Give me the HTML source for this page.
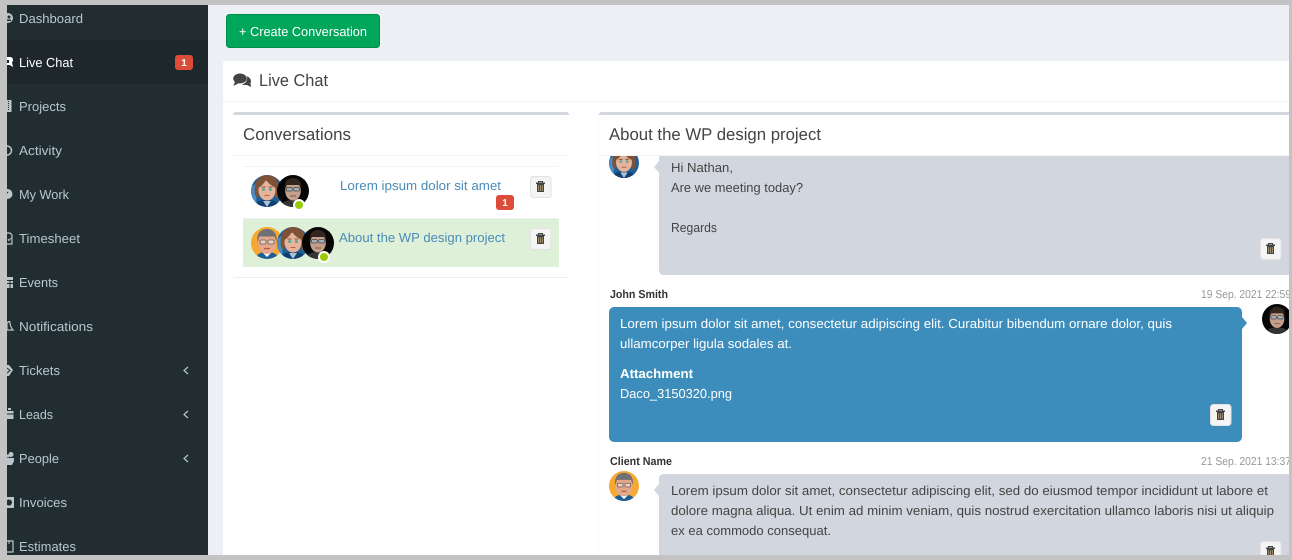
<!DOCTYPE html>
<html>
<head>
<meta charset="utf-8">
<title>Live Chat</title>
<style>
html,body{margin:0;padding:0;background:#c3c3c3;width:1292px;height:560px;overflow:hidden}
svg{display:block}
text{font-family:"Liberation Sans",sans-serif;font-size:13px;fill:#444;text-rendering:geometricPrecision}
.s text{fill:#b8c7ce}
.h{font-size:17px}
.l{fill:#4a8bb8}
.w{fill:#fff}
.n{font-size:11.5px;fill:#333;font-weight:bold}
.d{font-size:11.5px;fill:#999}
.b{font-size:10px;font-weight:bold;fill:#fff}
</style>
</head>
<body>
<svg xmlns="http://www.w3.org/2000/svg" width="1292" height="560" viewBox="0 0 1292 560">
<defs>
<clipPath id="c"><circle cx="16" cy="16" r="16"/></clipPath>
<g id="woman" clip-path="url(#c)">
<rect width="32" height="32" fill="#1d5f96"/>
<path d="M0 12L6 8L5 32H0Z" fill="#4a8cc4"/>
<path d="M4 32C5 26 10 25 16 25C22 25 27 26 28 32Z" fill="#123f70"/>
<path d="M12 26L16 32L20 26Z" fill="#a9c2d8"/>
<path d="M4 20C2 7 8 0 16 0C25 0 30 7 28 20L25 24L23 10L9 10L7 24Z" fill="#7d5236"/>
<ellipse cx="16" cy="15.500" rx="8.500" ry="10" fill="#e6b29a"/>
<path d="M7 13C11 11 13 8 15 5C18 9 21 11 25 13L25 4L16 1L7 4Z" fill="#7d5236"/>
<path d="M10.500 12H14.500M17.500 12H21.500" stroke="#5e3c28" stroke-width=".8"/>
<circle cx="12.600" cy="14.500" r="1.500" fill="#5aa596"/><circle cx="19.400" cy="14.500" r="1.500" fill="#5aa596"/>
<path d="M13.500 20.500H18.500" stroke="#b0614f" stroke-width="1"/>
</g>
<g id="man" clip-path="url(#c)">
<rect width="32" height="32" fill="#060606"/>
<path d="M4 32C5 26 10 25 16 25C22 25 27 26 28 32Z" fill="#333"/>
<ellipse cx="16" cy="16" rx="7.800" ry="9.500" fill="#c4a08c"/>
<path d="M8 14C7 6 11 3 16 3C21 3 25 6 24 14L22.500 10L9.500 10Z" fill="#33261e"/>
<rect x="9.500" y="12.500" width="5.800" height="3.500" rx="1" fill="#9fb0b8" stroke="#444" stroke-width=".7"/>
<rect x="16.700" y="12.500" width="5.800" height="3.500" rx="1" fill="#9fb0b8" stroke="#444" stroke-width=".7"/>
<path d="M13 21H19" stroke="#85574a" stroke-width="1"/>
</g>
<g id="old" clip-path="url(#c)">
<rect width="32" height="32" fill="#f6a832"/>
<path d="M4 32C6 26 11 25 16 25C21 25 26 26 28 32Z" fill="#1d5f96"/>
<path d="M11 25L16 30L21 25Z" fill="#fff"/>
<ellipse cx="16" cy="16.500" rx="9" ry="10.500" fill="#e3a78c"/>
<path d="M6.500 15C5.500 6 10 2 16 2C22 2 26.500 6 25.500 15L23.500 9.500L8.500 9.500Z" fill="#6e7073"/>
<rect x="9" y="13" width="6" height="4" rx="1" fill="#ecd2c2" stroke="#6a5a50" stroke-width=".8"/>
<rect x="17" y="13" width="6" height="4" rx="1" fill="#ecd2c2" stroke="#6a5a50" stroke-width=".8"/>
<path d="M13 21.500H19" stroke="#b9563e" stroke-width="1.200"/>
</g>
<g id="tr">
<rect x=".5" y=".5" width="20.500" height="21" rx="3" fill="#f4f4f4" stroke="#e2e2e2"/>
<path d="M8.500 6.500V5.500H12.500V6.500" fill="none" stroke="#444" stroke-width="1.100"/>
<rect x="6" y="6.500" width="9" height="1.500" fill="#444"/>
<path d="M7 8H14V16H7Z" fill="#444"/>
<path d="M8.700 9.200V15M10.500 9.200V15M12.300 9.200V15" stroke="#b9a67a" stroke-width=".8"/>
</g>
</defs>

<!-- content background -->
<rect x="7" y="5" width="1282" height="550" fill="#ecf0f5"/>

<!-- sidebar -->
<g class="s">
<rect x="7" y="5" width="201" height="550" fill="#222d32"/>
<rect x="7" y="40" width="201" height="44" fill="#1e282c"/>

<circle cx="8" cy="18" r="5" fill="#b8c7ce"/><circle cx="9" cy="17" r="1.500" fill="#222d32"/><rect x="7" y="19.500" width="4" height="1.500" fill="#222d32"/>
<path d="M7 57H10C13 57 14 60 12 62.500L13 67L9.500 65H7Z" fill="#fff"/><path d="M7 60H9V63H7Z" fill="#1e282c"/>
<rect x="7" y="100" width="4.500" height="12" fill="#b8c7ce"/><path d="M8.500 101V111" stroke="#222d32" stroke-dasharray="1 1"/>
<circle cx="7" cy="150.500" r="4.500" fill="none" stroke="#b8c7ce" stroke-width="1.500"/>
<circle cx="7.500" cy="194" r="5" fill="#b8c7ce"/><path d="M6 194L8 192" stroke="#222d32" stroke-width="1.200"/>
<path d="M7 233H10L12 235V244H7" fill="none" stroke="#b8c7ce" stroke-width="1.200"/><path d="M8 239L9 240.500L11 238" stroke="#b8c7ce" fill="none"/>
<rect x="7" y="277" width="6" height="11" fill="#b8c7ce"/><path d="M7 280.500H13M7 283.500H13M10 280V288" stroke="#222d32"/>
<path d="M7 330V323C9 321 10 321 10 323C10 326 12 329 13 330Z" fill="none" stroke="#b8c7ce" stroke-width="1.200"/>
<path d="M7 365H9L13 370L9 376H7Z" fill="#b8c7ce"/><path d="M7 368L10 370.500L7 373" stroke="#222d32" fill="none"/>
<path d="M7 411H13.500V419H7Z" fill="#b8c7ce"/><path d="M7 414H13.500" stroke="#222d32"/><rect x="8" y="408" width="3" height="2" fill="#b8c7ce"/>
<circle cx="11" cy="454.500" r="2.500" fill="#b8c7ce"/><path d="M7 458H14V461L12 465H7Z" fill="#b8c7ce"/><circle cx="8" cy="456" r="1.500" fill="#b8c7ce"/>
<rect x="7" y="497" width="7" height="11" fill="#b8c7ce"/><circle cx="9" cy="502.500" r="3" fill="#222d32"/>
<path d="M7 541H13V552H7" fill="none" stroke="#b8c7ce" stroke-width="1.200"/><path d="M9 540V544" stroke="#b8c7ce"/>

<text x="19" y="23" textLength="64" lengthAdjust="spacingAndGlyphs">Dashboard</text>
<text x="19" y="67" textLength="54" lengthAdjust="spacingAndGlyphs" style="fill:#fff">Live Chat</text>
<text x="19" y="111" textLength="47" lengthAdjust="spacingAndGlyphs">Projects</text>
<text x="19" y="155" textLength="43" lengthAdjust="spacingAndGlyphs">Activity</text>
<text x="19" y="199" textLength="50" lengthAdjust="spacingAndGlyphs">My Work</text>
<text x="19" y="243" textLength="61" lengthAdjust="spacingAndGlyphs">Timesheet</text>
<text x="19" y="287" textLength="39" lengthAdjust="spacingAndGlyphs">Events</text>
<text x="19" y="331" textLength="74" lengthAdjust="spacingAndGlyphs">Notifications</text>
<text x="19" y="375" textLength="41" lengthAdjust="spacingAndGlyphs">Tickets</text>
<text x="19" y="419" textLength="34" lengthAdjust="spacingAndGlyphs">Leads</text>
<text x="19" y="463" textLength="40" lengthAdjust="spacingAndGlyphs">People</text>
<text x="19" y="507" textLength="48" lengthAdjust="spacingAndGlyphs">Invoices</text>
<text x="19" y="551" textLength="57" lengthAdjust="spacingAndGlyphs">Estimates</text>

<rect x="175" y="55" width="18" height="15" rx="3" fill="#dd4b39"/>
<text x="184" y="66" text-anchor="middle" class="b" style="fill:#fff">1</text>

<path d="M188 367L184 370.500L188 374M188 411L184 414.500L188 418M188 455L184 458.500L188 462" fill="none" stroke="#b8c7ce" stroke-width="1.200"/>
</g>

<!-- create button -->
<rect x="226.500" y="14.500" width="153" height="33" rx="3" fill="#00a65a" stroke="#008d4c"/>
<text x="239" y="36" textLength="128" lengthAdjust="spacingAndGlyphs" class="w">+ Create Conversation</text>

<!-- main box -->
<path d="M223 555V64Q223 61 226 61H1289V555Z" fill="#fff"/>
<rect x="223" y="101" width="1066" height="1" fill="#f4f4f4"/>
<ellipse cx="240" cy="78.500" rx="6.800" ry="5" fill="#444"/>
<path d="M235 81L233.500 86L239 83Z" fill="#444"/>
<path d="M247 76C250 78 252 80 250.500 83L251 87L247 85C244.500 85 243 85 241.500 84.500C245 84 248 81 247 76Z" fill="#444"/>
<text x="259" y="86" textLength="69" lengthAdjust="spacingAndGlyphs" class="h">Live Chat</text>

<!-- conversations panel -->
<rect x="233" y="112" width="336" height="166" rx="3" fill="#eee"/>
<rect x="233" y="112" width="336" height="165" rx="3" fill="#fff"/>
<path d="M233 115V115Q233 112 236 112H566Q569 112 569 115Z" fill="#d2d6de"/>
<rect x="233" y="155" width="336" height="1" fill="#f4f4f4"/>
<text x="243" y="140" textLength="108" lengthAdjust="spacingAndGlyphs" class="h">Conversations</text>
<rect x="243" y="166" width="316" height="1" fill="#f4f4f4"/>
<rect x="243" y="218" width="316" height="1" fill="#eef1ee"/>
<rect x="243" y="219" width="316" height="48" fill="#dff0d8"/>

<use href="#woman" x="251" y="175"/>
<use href="#man" x="277" y="175"/>
<circle cx="299" cy="205" r="6" fill="#fff"/>
<circle cx="299" cy="205" r="4" fill="#9c0"/>

<use href="#old" x="251" y="227"/>
<use href="#woman" x="277" y="227"/>
<use href="#man" x="302" y="227"/>
<circle cx="324" cy="257" r="6" fill="#fff"/>
<circle cx="324" cy="257" r="4" fill="#9c0"/>

<text x="340" y="190" textLength="161" lengthAdjust="spacingAndGlyphs" class="l">Lorem ipsum dolor sit amet</text>
<text x="339" y="242" textLength="166" lengthAdjust="spacingAndGlyphs" class="l">About the WP design project</text>
<rect x="496" y="195" width="18" height="15" rx="3" fill="#dd4b39"/>
<text x="505" y="206" text-anchor="middle" class="b">1</text>
<use href="#tr" x="530" y="176"/>
<use href="#tr" x="530" y="228"/>

<!-- message panel -->
<rect x="598" y="112" width="691" height="443" fill="#f8f8f8"/>
<rect x="599" y="112" width="690" height="443" fill="#fff"/>

<!-- message 1 -->
<use href="#woman" transform="translate(609 148) scale(.9375)"/>
<path d="M659 156H1289V275H664Q659 275 659 270Z" fill="#d2d6de"/>
<path d="M659 161L654 167L659 173Z" fill="#d2d6de"/>
<text x="671" y="172" textLength="62" lengthAdjust="spacingAndGlyphs">Hi Nathan,</text>
<text x="671" y="192" textLength="132" lengthAdjust="spacingAndGlyphs">Are we meeting today?</text>
<text x="671" y="232" textLength="46" lengthAdjust="spacingAndGlyphs">Regards</text>
<use href="#tr" x="1260" y="238"/>

<!-- panel header over message -->
<rect x="599" y="115" width="690" height="41" fill="#fff"/>
<rect x="599" y="155" width="690" height="1" fill="#f4f4f4"/>
<path d="M599 115Q599 112 602 112H1289V115Z" fill="#d2d6de"/>
<text x="609" y="140" textLength="212" lengthAdjust="spacingAndGlyphs" class="h">About the WP design project</text>

<!-- message 2 -->
<text x="610" y="298" textLength="58" lengthAdjust="spacingAndGlyphs" class="n">John Smith</text>
<text x="1201" y="298" textLength="90" lengthAdjust="spacingAndGlyphs" class="d">19 Sep. 2021 22:59</text>
<rect x="609" y="307" width="633" height="135" rx="5" fill="#3c8dbc"/>
<path d="M1242 317L1247 323L1242 329Z" fill="#3c8dbc"/>
<use href="#man" transform="translate(1262 304) scale(.9375)"/>
<text x="620" y="328" textLength="552" lengthAdjust="spacingAndGlyphs" class="w">Lorem ipsum dolor sit amet, consectetur adipiscing elit. Curabitur bibendum ornare dolor, quis</text>
<text x="620" y="348" textLength="172" lengthAdjust="spacingAndGlyphs" class="w">ullamcorper ligula sodales at.</text>
<text x="620" y="378" textLength="73" lengthAdjust="spacingAndGlyphs" class="w" font-weight="bold">Attachment</text>
<text x="620" y="398" textLength="112" lengthAdjust="spacingAndGlyphs" class="w">Daco_3150320.png</text>
<use href="#tr" x="1210" y="404"/>

<!-- message 3 -->
<text x="610" y="465" textLength="62" lengthAdjust="spacingAndGlyphs" class="n">Client Name</text>
<text x="1201" y="465" textLength="90" lengthAdjust="spacingAndGlyphs" class="d">21 Sep. 2021 13:37</text>
<use href="#old" transform="translate(609 471) scale(.9375)"/>
<path d="M659 560V479Q659 474 664 474H1289V560Z" fill="#d2d6de"/>
<path d="M659 484L654 490L659 496Z" fill="#d2d6de"/>
<text x="671" y="495" textLength="597" lengthAdjust="spacingAndGlyphs">Lorem ipsum dolor sit amet, consectetur adipiscing elit, sed do eiusmod tempor incididunt ut labore et</text>
<text x="671" y="515" textLength="603" lengthAdjust="spacingAndGlyphs">dolore magna aliqua. Ut enim ad minim veniam, quis nostrud exercitation ullamco laboris nisi ut aliquip</text>
<text x="671" y="535" textLength="160" lengthAdjust="spacingAndGlyphs">ex ea commodo consequat.</text>
<use href="#tr" x="1260" y="541"/>

<!-- grey frame -->
<path fill-rule="evenodd" d="M0 0H1292V560H0ZM7 5V555H1289V5Z" fill="#c3c3c3"/>
</svg>
</body>
</html>
